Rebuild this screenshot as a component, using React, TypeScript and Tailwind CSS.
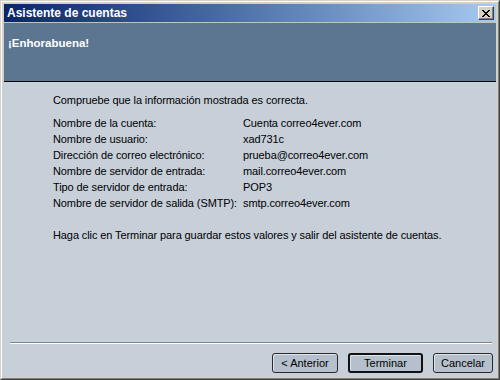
const font = "font-['Liberation_Sans',Arial,sans-serif]";

const rows: [string, string][] = [
  ["Nombre de la cuenta:", "Cuenta correo4ever.com"],
  ["Nombre de usuario:", "xad731c"],
  ["Dirección de correo electrónico:", "prueba@correo4ever.com"],
  ["Nombre de servidor de entrada:", "mail.correo4ever.com"],
  ["Tipo de servidor de entrada:", "POP3"],
  ["Nombre de servidor de salida (SMTP):", "smtp.correo4ever.com"],
];

function WizButton({ label, primary, width }: { label: string; primary?: boolean; width: string }) {
  return (
    <button
      className={`${width} h-[20px] rounded-[3px] bg-[#b6c0cc] text-[11px] text-black leading-none flex items-center justify-center shadow-[inset_1px_1px_0_#dfe5ec] ${
        primary ? "border-2 border-[#111]" : "border border-[#2a2a2a]"
      }`}
    >
      {label}
    </button>
  );
}

export default function App() {
  return (
    <div className={`w-[500px] h-[380px] ${font} border border-t-[#d4d0c8] border-l-[#d4d0c8] border-r-[#404040] border-b-[#404040]`}>
      <div className="w-full h-full flex flex-col border border-t-white border-l-white border-r-[#808080] border-b-[#808080] bg-[#d4d0c8]">
        {/* title bar */}
        <div className="mx-[2px] mt-[2px] h-[18px] flex items-center justify-between pl-[3px] pr-[2px] bg-gradient-to-r from-[#0a246a] to-[#a6caf0]">
          <span className="text-white font-bold text-[12px]">Asistente de cuentas</span>
          <div className="w-[16px] h-[14px] flex items-center justify-center bg-[#d4d0c8] border border-t-white border-l-white border-r-[#404040] border-b-[#404040] shadow-[inset_-1px_-1px_0_#808080]">
            <svg width="8" height="7" viewBox="0 0 8 7" shapeRendering="crispEdges">
              <path d="M0 0h2v1h-2zM6 0h2v1h-2zM1 1h2v1h-2zM5 1h2v1h-2zM2 2h4v1h-4zM3 3h2v1h-2zM2 4h4v1h-4zM1 5h2v1h-2zM5 5h2v1h-2zM0 6h2v1h-2zM6 6h2v1h-2z" fill="#000" />
            </svg>
          </div>
        </div>
        <div className="mx-[2px] h-px bg-[#c0c4c8]" />
        {/* header */}
        <div className="mx-[2px] h-[59px] bg-[#5c7691] border-b border-black px-[4px] pt-[7px]">
          <span className="text-white font-bold text-[11.5px]">¡Enhorabuena!</span>
        </div>
        {/* body */}
        <div className="flex-1 flex flex-col bg-[#c7cfd9] mr-[1px] mb-[1px]">
          <div className="pl-[51px] pt-[10px] text-[11px] tracking-[-0.1px] text-black leading-[16px]">
            <p>Compruebe que la información mostrada es correcta.</p>
            <div className="mt-[7px]">
              {rows.map(([k, v]) => (
                <div key={k} className="flex">
                  <span className="w-[190px]">{k}</span>
                  <span>{v}</span>
                </div>
              ))}
            </div>
            <p className="mt-[16px]">Haga clic en Terminar para guardar estos valores y salir del asistente de cuentas.</p>
          </div>
          <div className="flex-1" />
          <div className="ml-[8px] mr-[5px] h-[2px] border-t border-t-[#7c8591] border-b border-b-white" />
          <div className="flex justify-end gap-[10px] pr-[4px] pt-[9px] pb-[4px]">
            <WizButton label="< Anterior" width="w-[66px]" />
            <WizButton label="Terminar" width="w-[75px]" primary />
            <WizButton label="Cancelar" width="w-[60px]" />
          </div>
        </div>
      </div>
    </div>
  );
}
